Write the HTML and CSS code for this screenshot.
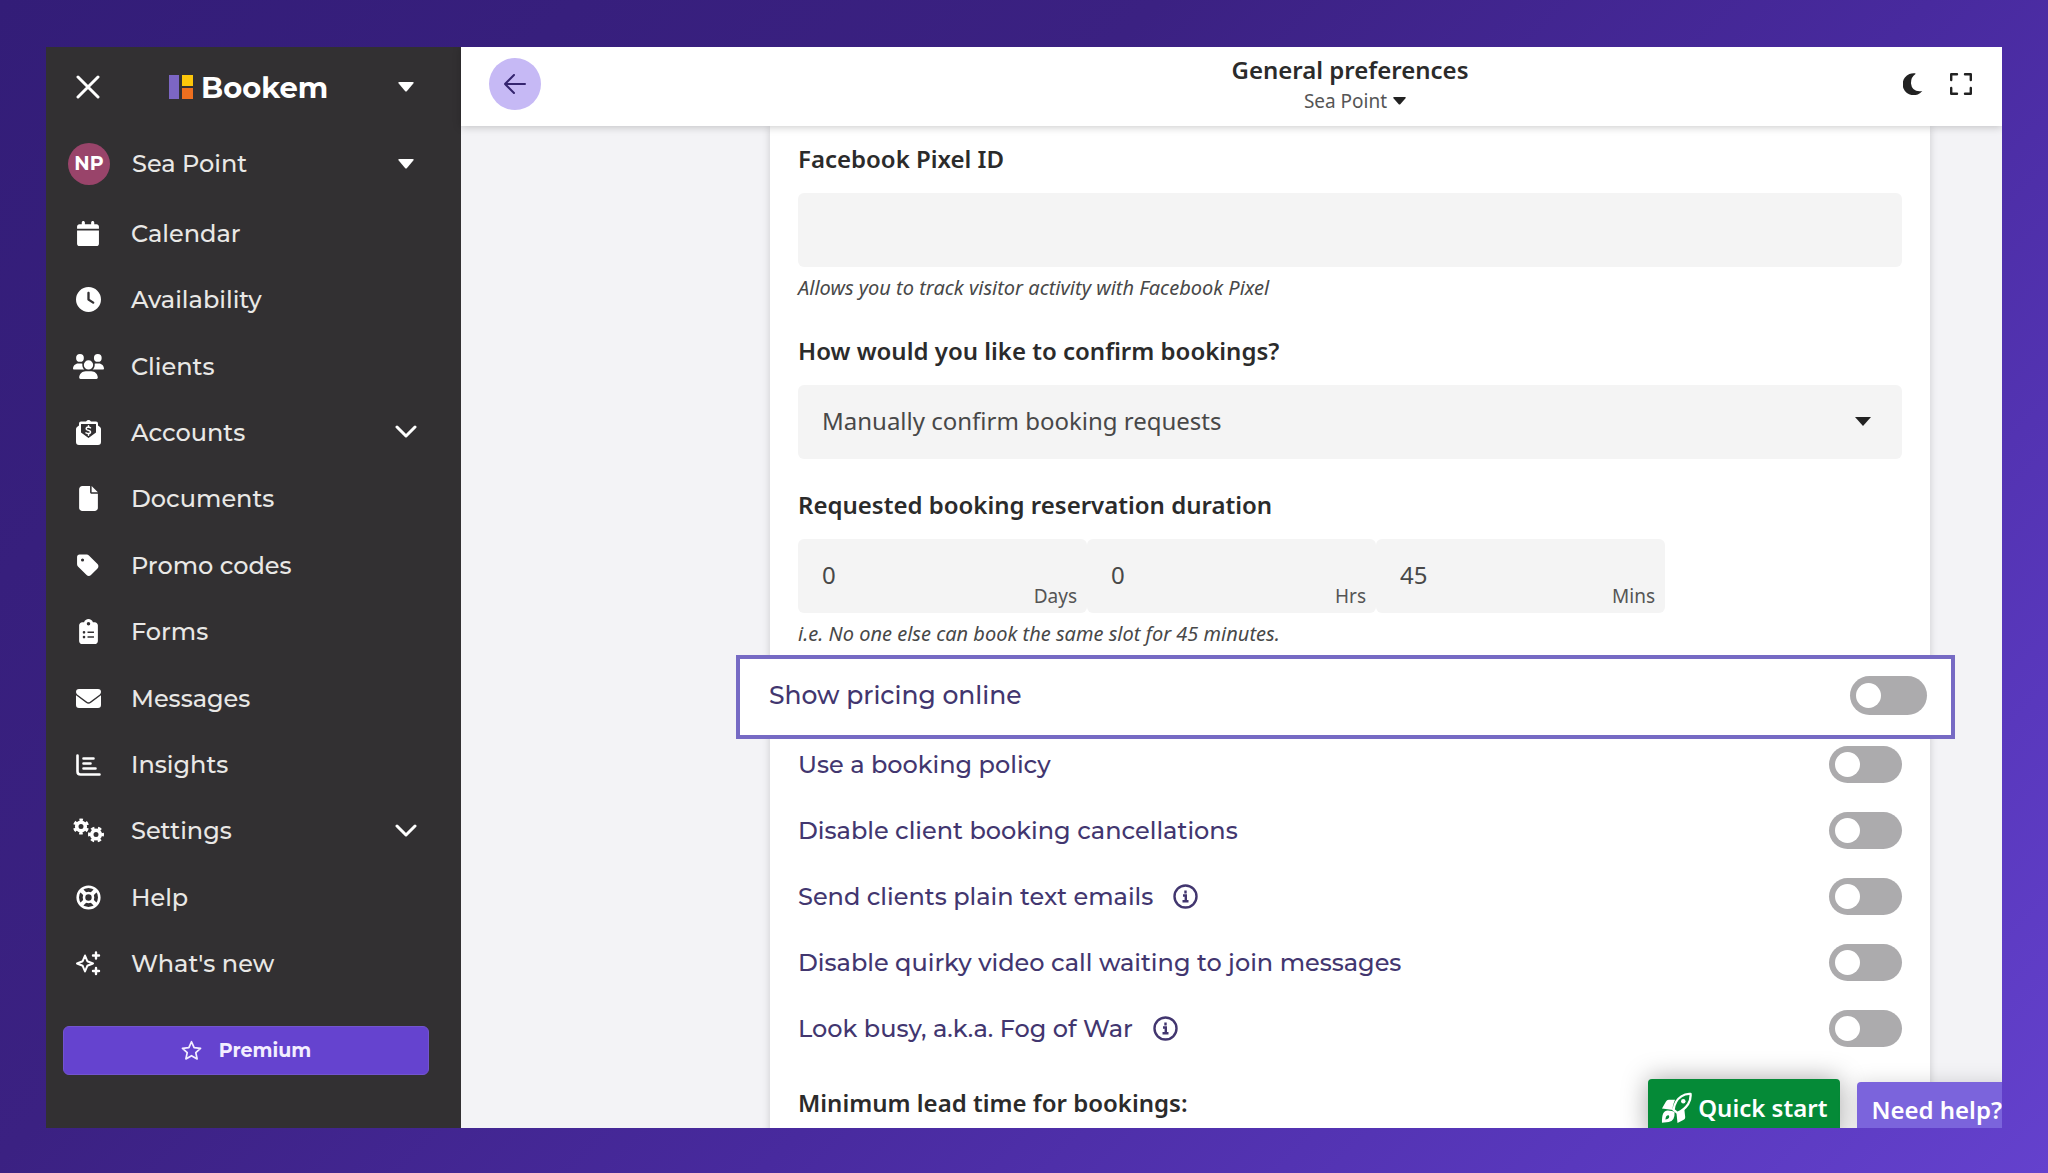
FILE: index.html
```html
<!DOCTYPE html>
<html lang="en">
<head>
<meta charset="utf-8">
<meta name="viewport" content="width=device-width, initial-scale=1">
<title>General preferences - Bookem</title>
<link rel="stylesheet" href="styles.css">
</head>
<body>
<div class="app">
  <aside class="sidebar">
    <div class="brand-row">
      <button class="icon-button slot" type="button" aria-label="Close menu">
        <svg width="24" height="24" viewBox="0 0 24 24" fill="none" stroke="currentColor" stroke-width="3" stroke-linecap="round"><path d="M2 2l20 20M22 2L2 22"/></svg>
      </button>
      <a class="brand" href="#">
        <svg width="24" height="24" viewBox="0 0 24 24"><path fill="#7c66c4" d="M0 0h10v24H0z"/><path fill="#fcc60a" d="M13 0h11v11H13z"/><path fill="#ee6f1f" d="M13 13h11v11H13z"/></svg>
        <span>Bookem</span>
      </a>
      <button class="icon-button end" type="button" aria-label="Switch business">
        <svg width="16" height="10" viewBox="0 0 16 10"><path fill="currentColor" d="M1.500 0h13q2 0 .8 1.600L9 9q-1 1-2 0L.7 1.600Q-.5 0 1.500 0z"/></svg>
      </button>
    </div>
    <button class="place" type="button">
      <span class="avatar">NP</span>
      <span class="nav-text">Sea Point</span>
      <span class="end"><svg width="16" height="10" viewBox="0 0 16 10"><path fill="currentColor" d="M1.500 0h13q2 0 .8 1.600L9 9q-1 1-2 0L.7 1.600Q-.5 0 1.500 0z"/></svg></span>
    </button>
    <nav class="nav" aria-label="Main">
      <a href="#"><span class="slot"><svg width="22" height="25" viewBox="0 0 448 512"><path fill="currentColor" d="M96 32V64H48C21.500 64 0 85.500 0 112v48H448V112c0-26.500-21.500-48-48-48H352V32c0-17.700-14.300-32-32-32s-32 14.300-32 32V64H160V32c0-17.700-14.300-32-32-32S96 14.300 96 32zM448 192H0V464c0 26.500 21.500 48 48 48H400c26.500 0 48-21.500 48-48V192z"/></svg></span><span class="nav-text">Calendar</span></a>
      <a href="#"><span class="slot"><svg width="25" height="25" viewBox="0 0 512 512"><path fill="currentColor" d="M256 0a256 256 0 1 1 0 512A256 256 0 1 1 256 0zM232 120V256c0 8 4 15.500 10.700 20l96 64c11 7.400 25.900 4.400 33.300-6.700s4.400-25.900-6.700-33.300L280 243.200V120c0-13.300-10.700-24-24-24s-24 10.700-24 24z"/></svg></span><span class="nav-text">Availability</span></a>
      <a href="#"><span class="slot"><svg width="31" height="25" viewBox="0 0 640 512"><path fill="currentColor" d="M144 0a80 80 0 1 1 0 160A80 80 0 1 1 144 0zM512 0a80 80 0 1 1 0 160A80 80 0 1 1 512 0zM0 298.700C0 239.800 47.800 192 106.700 192h42.700c15.900 0 31 3.500 44.600 9.700-1.300 7.200-1.900 14.700-1.900 22.300 0 38.200 16.800 72.500 43.300 96H21.300C9.600 320 0 310.400 0 298.700zM405.300 320c26.600-23.500 43.300-57.800 43.300-96 0-7.600-.7-15-1.900-22.300 13.600-6.300 28.700-9.700 44.600-9.700h42.700C592.200 192 640 239.800 640 298.700c0 11.800-9.600 21.300-21.300 21.300H405.300zM224 224a96 96 0 1 1 192 0 96 96 0 1 1-192 0zM128 485.300C128 411.700 187.700 352 261.300 352h117.400C452.300 352 512 411.700 512 485.300c0 14.700-11.900 26.700-26.700 26.700H154.700c-14.700 0-26.700-11.900-26.700-26.700z"/></svg></span><span class="nav-text">Clients</span></a>
      <a href="#"><span class="slot"><svg width="25" height="25" viewBox="0 0 25 25"><path fill="currentColor" fill-rule="evenodd" d="M9 1.500h1Q12.500-1.300 15 1.500h5q2 0 2 2v2l2 1.500q1 1 1 2v13q0 3-3 3H3q-3 0-3-3V9q0-1 1-2l2-1.500v-2q0-2 2-2zM5 4v8.500l7.500 5.500 7.500-5.500V4z"/><path fill="none" stroke="currentColor" stroke-width="1.500" stroke-linecap="round" d="M14.500 7.800q-2-1.200-3.800-.3-1.200 1.500.4 2.400l2.600 1q1.500 1.200.2 2.400-1.800.8-3.900-.4M12.500 5.800v1.400M12.500 13.800v1.400"/></svg></span><span class="nav-text">Accounts</span><span class="end"><svg width="22" height="14" viewBox="0 0 22 14" fill="none" stroke="currentColor" stroke-width="3" stroke-linecap="round" stroke-linejoin="round"><path d="M2 2l9 9 9-9"/></svg></span></a>
      <a href="#"><span class="slot"><svg width="19" height="25" viewBox="0 0 384 512"><path fill="currentColor" d="M0 64C0 28.700 28.700 0 64 0H224V128c0 17.700 14.300 32 32 32H384V448c0 35.300-28.700 64-64 64H64c-35.300 0-64-28.700-64-64V64zm384 64H256V0L384 128z"/></svg></span><span class="nav-text">Documents</span></a>
      <a href="#"><span class="slot"><svg width="22" height="25" viewBox="0 0 448 512"><path fill="currentColor" d="M0 80V229.500c0 17 6.700 33.300 18.700 45.300l176 176c25 25 65.500 25 90.500 0L418.700 317.300c25-25 25-65.500 0-90.500l-176-176c-12-12-28.300-18.700-45.300-18.700H48C21.500 32 0 53.500 0 80zm112 32a32 32 0 1 1 0 64 32 32 0 1 1 0-64z"/></svg></span><span class="nav-text">Promo codes</span></a>
      <a href="#"><span class="slot"><svg width="19" height="25" viewBox="0 0 384 512"><path fill="currentColor" fill-rule="evenodd" d="M192 0c-41.800 0-77.400 26.700-90.500 64H64C28.700 64 0 92.700 0 128V448c0 35.300 28.700 64 64 64H320c35.300 0 64-28.700 64-64V128c0-35.300-28.700-64-64-64H282.500C269.400 26.700 233.800 0 192 0zm0 60a36 36 0 1 1 0 72 36 36 0 1 1 0-72zM100 246a27 27 0 1 1 0 54 27 27 0 1 1 0-54zM172 256h132v32H172zM100 344a27 27 0 1 1 0 54 27 27 0 1 1 0-54zM172 354h132v32H172z"/></svg></span><span class="nav-text">Forms</span></a>
      <a href="#"><span class="slot"><svg width="25" height="19" viewBox="0 0 25 19"><path fill="currentColor" d="M3 0h19q3 0 3 3 0 1.500-1.200 2.400L14 12.700q-1.500 1-3 0L1.200 5.400Q0 4.500 0 3q0-3 3-3zM0 6.300l10 7.500q2.500 1.800 5 0l10-7.500V16q0 3-3 3H3q-3 0-3-3z"/></svg></span><span class="nav-text">Messages</span></a>
      <a href="#"><span class="slot"><svg width="25" height="22" viewBox="0 0 25 22" fill="none" stroke="currentColor" stroke-width="2.600" stroke-linecap="round"><path d="M1.500 1.500v16q0 3 3 3h19M7.500 4.500h10M7.500 9.500h7M7.500 14.500h12"/></svg></span><span class="nav-text">Insights</span></a>
      <a href="#"><span class="slot"><svg width="31" height="25" viewBox="0 0 31 25" fill="none" stroke="currentColor"><circle cx="8" cy="8.500" r="4.300" stroke-width="3.600"/><circle cx="8" cy="8.500" r="6.700" stroke-width="2.600" stroke-dasharray="3.500 3.516" stroke-dashoffset="12.300"/><circle cx="23" cy="16.500" r="4.300" stroke-width="3.600"/><circle cx="23" cy="16.500" r="6.700" stroke-width="2.600" stroke-dasharray="3.500 3.516" stroke-dashoffset="1.750"/></svg></span><span class="nav-text">Settings</span><span class="end"><svg width="22" height="14" viewBox="0 0 22 14" fill="none" stroke="currentColor" stroke-width="3" stroke-linecap="round" stroke-linejoin="round"><path d="M2 2l9 9 9-9"/></svg></span></a>
      <a href="#"><span class="slot"><svg width="25" height="25" viewBox="0 0 25 25" fill="none" stroke="currentColor"><circle cx="12.500" cy="12.500" r="10.800" stroke-width="2.600"/><circle cx="12.500" cy="12.500" r="4.500" stroke-width="2.600"/><path stroke-width="4" d="M4.500 4.500l5 5M20.500 4.500l-5 5M4.500 20.500l5-5M20.500 20.500l-5-5"/></svg></span><span class="nav-text">Help</span></a>
      <a href="#"><span class="slot"><svg width="25" height="25" viewBox="0 0 25 25" fill="none" stroke="currentColor" stroke-width="2" stroke-linejoin="round" stroke-linecap="round"><path d="M9 4.500l2.300 5.700 5.700 2.300-5.700 2.300L9 20.500l-2.300-5.700L1 12.500l5.700-2.300z"/><path stroke-width="2.400" d="M20 1.500v6M17 4.500h6M20 17v6M17 20h6"/></svg></span><span class="nav-text">What's new</span></a>
    </nav>
    <button class="premium" type="button">
      <svg width="21" height="21" viewBox="0 0 24 24" fill="none" stroke="currentColor" stroke-width="2" stroke-linejoin="round"><path d="M12 2l3 6.700 7.300.8-5.400 4.900 1.500 7.200L12 18l-6.400 3.600 1.500-7.200L1.700 9.500 9 8.700z"/></svg>
      <span>Premium</span>
    </button>
  </aside>

  <div class="page">
    <header class="topbar">
      <button class="back" type="button" aria-label="Back">
        <svg width="22" height="20" viewBox="0 0 22 20" fill="none" stroke="currentColor" stroke-width="2" stroke-linecap="round" stroke-linejoin="round"><path d="M21 10H1M10 1L1 10l9 9"/></svg>
      </button>
      <div class="title">
        <h1>General preferences</h1>
        <button class="location" type="button">Sea Point
          <svg width="13" height="8" viewBox="0 0 13 8"><path fill="#222" d="M1 0h11q1.500 0 .5 1.300L7.500 7q-1 1-2 0L.5 1.300Q-.5 0 1 0z"/></svg>
        </button>
      </div>
      <div class="actions">
        <button class="icon-button" type="button" aria-label="Dark mode">
          <svg width="20" height="22" viewBox="0 0 20 22"><path fill="currentColor" d="M12 .3A11 11 0 1 0 19.300 18Q9 19.500 8 10.500 7.800 4 12.500 1 12.800.3 12 .3z"/></svg>
        </button>
        <button class="icon-button" type="button" aria-label="Full screen">
          <svg width="22" height="22" viewBox="0 0 22 22" fill="none" stroke="currentColor" stroke-width="2.400" stroke-linecap="round" stroke-linejoin="round"><path d="M7 1.200H1.200V7M15 1.200h5.800V7M1.200 15v5.800H7M20.800 15v5.800H15"/></svg>
        </button>
      </div>
    </header>

    <main class="content">
      <form class="card">
        <div class="field">
          <label class="label" for="pixel">Facebook Pixel ID</label>
          <input class="control" id="pixel" type="text">
          <p class="hint">Allows you to track visitor activity with Facebook Pixel</p>
        </div>
        <div class="field field-tight">
          <label class="label" for="confirm">How would you like to confirm bookings?</label>
          <div class="select">
            <select class="control" id="confirm"><option>Manually confirm booking requests</option></select>
            <svg class="select-caret" width="16" height="9" viewBox="0 0 16 9"><path fill="#222" d="M0 0h16L8 9z"/></svg>
          </div>
        </div>
        <fieldset class="field field-last">
          <legend class="label">Requested booking reservation duration</legend>
          <div class="durations">
            <div class="duration"><input class="control" id="days" type="text" value="0"><label class="unit" for="days">Days</label></div>
            <div class="duration"><input class="control" id="hrs" type="text" value="0"><label class="unit" for="hrs">Hrs</label></div>
            <div class="duration"><input class="control" id="mins" type="text" value="45"><label class="unit" for="mins">Mins</label></div>
          </div>
          <p class="hint">i.e. No one else can book the same slot for 45 minutes.</p>
        </fieldset>

        <div class="option option-highlight"><label for="o1">Show pricing online</label><input class="toggle toggle-large" id="o1" type="checkbox"></div>
        <div class="option"><label for="o2">Use a booking policy</label><input class="toggle" id="o2" type="checkbox"></div>
        <div class="option"><label for="o3">Disable client booking cancellations</label><input class="toggle" id="o3" type="checkbox"></div>
        <div class="option"><label for="o4">Send clients plain text emails</label><svg class="info" width="25" height="25" viewBox="0 0 25 25" fill="none" stroke="currentColor" stroke-width="2.400"><circle cx="12.500" cy="12.500" r="11"/><path d="M10 11.500h2.800V17M9.500 17.300h6M12.500 6.500v3"/></svg><input class="toggle" id="o4" type="checkbox"></div>
        <div class="option"><label for="o5">Disable quirky video call waiting to join messages</label><input class="toggle" id="o5" type="checkbox"></div>
        <div class="option"><label for="o6">Look busy, a.k.a. Fog of War</label><svg class="info" width="25" height="25" viewBox="0 0 25 25" fill="none" stroke="currentColor" stroke-width="2.400"><circle cx="12.500" cy="12.500" r="11"/><path d="M10 11.500h2.800V17M9.500 17.300h6M12.500 6.500v3"/></svg><input class="toggle" id="o6" type="checkbox"></div>

        <h2 class="label lead-time">Minimum lead time for bookings:</h2>
      </form>
    </main>

    <div class="floating">
      <button class="quick-start" type="button">
        <svg width="31" height="31" viewBox="0 0 32 32"><path fill="none" stroke="currentColor" stroke-width="2.400" stroke-linejoin="round" d="M13 18.500Q14 9 21 4.500q4.500-3 9.500-2.500.5 6-2.500 10.500-4 6-11 9z"/><circle cx="23" cy="9.500" r="2.300" fill="currentColor"/><path fill="currentColor" d="M14.500 8Q11 16 12.500 18.500L1 17l4-7q1-2 3-2zM24 17q-5 5-8 5l1 10 6-3q2-1 2-3zM7 19q5 0 7 2 .500 9-6 10l-7 .8Q.5 19 7 19zm1 5q-3-.5-3.500 4.500Q10 27.500 8 24z" fill-rule="evenodd"/></svg>
        <span>Quick start</span>
      </button>
      <button class="need-help" type="button">Need help?</button>
    </div>
  </div>
</div>
</body>
</html>
```
FILE: styles.css
```css
* { box-sizing: border-box; }

body {
  margin: 0;
  height: 100vh;
  padding: 47px 46px 45px;
  background: linear-gradient(135deg, #331d78, #3b2182 36%, #482a9e 60%, #5938bd 85%, #6441cd);
  font-family: "Noto Sans", "Open Sans", sans-serif;
  font-size: 24px;
  color: #2b2b2b;
}

button, input, select { font: inherit; color: inherit; }
button { padding: 0; border: 0; background: none; cursor: pointer; }
svg { display: block; flex: none; }
h1, h2, p { margin: 0; }

.app {
  display: flex;
  height: 100%;
  overflow: hidden;
  background: #f3f3f6;
}

/* Sidebar */
.sidebar {
  display: flex;
  flex-direction: column;
  flex: none;
  width: 415px;
  background: #323032;
  color: #fff;
  font-family: Montserrat, Inter, sans-serif;
}

.brand-row, .place, .nav a {
  display: flex;
  align-items: center;
  gap: 22px;
  padding: 0 44px 0 21px;
}
.brand-row { height: 80px; flex: none; }
.place { height: 73px; flex: none; padding-left: 22px; text-align: left; }

.icon-button { display: grid; place-items: center; }
.slot { display: grid; place-items: center; flex: none; width: 42px; }
.end { display: grid; place-items: center; width: 22px; margin-left: auto; }

.brand {
  display: flex;
  align-items: center;
  gap: 8px;
  margin-left: 38px;
  color: #fff;
  font-size: 29px;
  font-weight: 700;
  text-decoration: none;
}

.avatar {
  display: grid;
  place-items: center;
  flex: none;
  width: 42px;
  height: 42px;
  border-radius: 50%;
  background: #99446a;
  font-size: 19px;
  font-weight: 700;
}

.nav {
  display: grid;
  flex: 1;
  grid-auto-rows: 1fr;
}
.nav a { color: #fff; text-decoration: none; }
.nav-text { color: #e9e8e6; font-size: 24px; font-weight: 500; }

.premium {
  display: flex;
  align-items: center;
  justify-content: center;
  gap: 17px;
  flex: none;
  height: 49px;
  margin: 29px 32px 53px 17px;
  border: 1px solid #7354cf;
  border-radius: 6px;
  background: #6543cf;
  color: #f3eeff;
  font-size: 19px;
  font-weight: 700;
}

/* Top bar */
.page {
  position: relative;
  display: flex;
  flex-direction: column;
  flex: 1;
  min-width: 0;
}
.topbar {
  z-index: 1;
  display: grid;
  grid-template-columns: 309px 1fr 72px;
  align-items: center;
  flex: none;
  height: 79px;
  padding-bottom: 6px;
  background: #fff;
  box-shadow: 0 1px 8px rgba(0, 0, 0, .22);
}
.back {
  display: grid;
  place-items: center;
  grid-area: 1 / 1;
  width: 52px;
  height: 52px;
  margin-left: 28px;
  border-radius: 50%;
  background: #c6b9f5;
  color: #35256f;
}
.title {
  grid-area: 1 / 2;
  display: flex;
  flex-direction: column;
  align-items: center;
}
.title h1 { font-size: 24px; line-height: 34px; font-weight: 600; }
.location {
  display: flex;
  align-items: center;
  gap: 6px;
  padding-left: 10px;
  font-size: 19px;
  line-height: 28px;
  color: #555;
}
.actions {
  grid-area: 1 / 2 / 2 / 4;
  justify-self: end;
  display: flex;
  gap: 27px;
  padding-right: 30px;
  color: #222;
}

/* Preferences form */
.content {
  flex: 1;
  min-height: 0;
  padding: 0 72px 0 309px;
}
.card {
  padding: 18px 28px;
  background: #fff;
  box-shadow: 0 0 8px rgba(0, 0, 0, .16);
}
.field { margin: 0 0 36px; padding: 0; border: 0; }
.field-tight { margin-bottom: 31px; }
.field-last { margin-bottom: 9px; }
.label {
  display: block;
  padding: 0;
  margin-bottom: 19px;
  font-size: 24px;
  line-height: 30px;
  font-weight: 600;
}
.control {
  display: block;
  width: 100%;
  height: 74px;
  padding: 0 24px 4px;
  border: 0;
  border-radius: 6px;
  background: #f4f4f4;
  color: #484848;
  appearance: none;
}
.hint {
  margin-top: 9px;
  font-size: 20px;
  line-height: 24px;
  font-style: italic;
  color: #484848;
}
.select { position: relative; }
.select-caret {
  position: absolute;
  top: 32px;
  right: 31px;
  pointer-events: none;
}
.durations { display: flex; }
.duration { position: relative; width: 289px; }
.unit {
  position: absolute;
  right: 10px;
  bottom: 5px;
  font-size: 19px;
  line-height: 24px;
  color: #555;
}

.option {
  display: flex;
  align-items: center;
  height: 66px;
  color: #42366f;
  font-family: Montserrat, Inter, sans-serif;
  font-weight: 500;
}
.option-highlight {
  position: relative;
  height: 84px;
  margin: 0 -53px -8px -62px;
  padding: 0 24px 4px 29px;
  border: 4px solid #766ac4;
  background: #fff;
  font-size: 25px;
}
.info { margin-left: 20px; }

.toggle {
  display: flex;
  align-items: center;
  flex: none;
  width: 73px;
  height: 37px;
  margin: 0 0 0 auto;
  padding: 0 6px;
  border-radius: 19px;
  background: #acabad;
  appearance: none;
}
.toggle::before {
  content: "";
  width: 25px;
  height: 25px;
  border-radius: 50%;
  background: #fff;
}
.toggle-large { width: 77px; height: 39px; border-radius: 20px; }
.toggle:checked { justify-content: flex-end; background: #6543cf; }
.lead-time { margin-top: 27px; }

/* Floating help buttons, anchored past the bottom edge */
.floating {
  position: absolute;
  z-index: 2;
  right: -14px;
  bottom: -12px;
  display: flex;
  align-items: flex-end;
  gap: 17px;
  color: #fff;
  font-weight: 600;
}
.quick-start, .need-help {
  display: flex;
  align-items: center;
  border-radius: 4px;
  white-space: nowrap;
}
.quick-start {
  gap: 6px;
  height: 61px;
  padding: 0 13px 4px;
  background: #058a37;
  box-shadow: 0 0 26px rgba(0, 0, 0, .35);
}
.need-help {
  height: 58px;
  padding: 0 14px 4px;
  background: #7b64dc;
  box-shadow: 0 0 20px rgba(0, 0, 0, .15);
}
```
